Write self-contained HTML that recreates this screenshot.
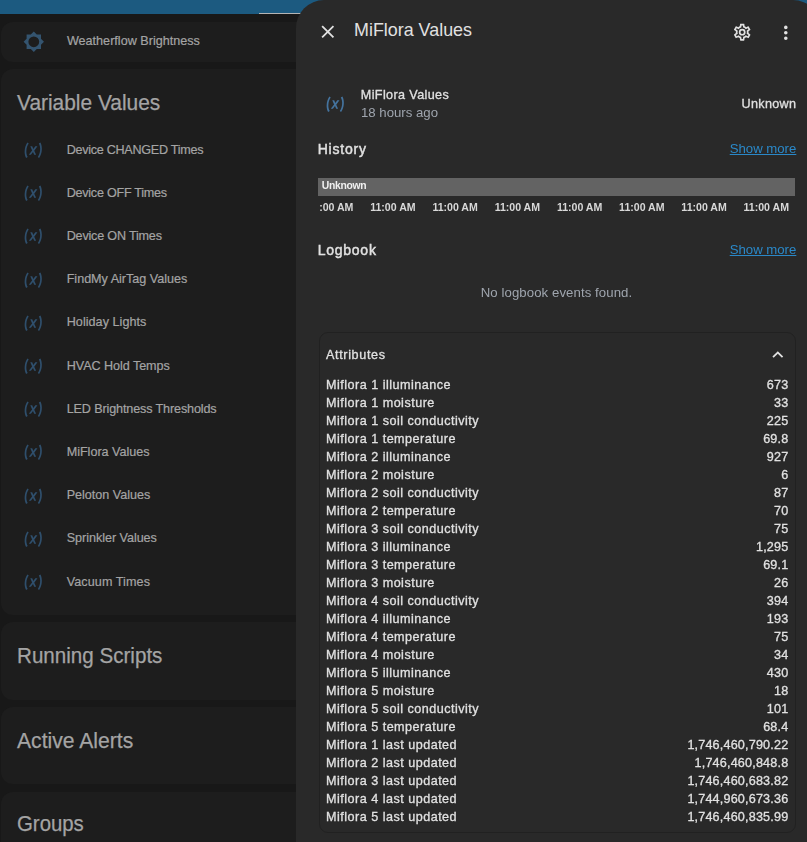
<!DOCTYPE html>
<html><head><meta charset="utf-8"><style>
html,body{margin:0;padding:0;}
body{width:807px;height:842px;overflow:hidden;position:relative;background:#181818;font-family:"Liberation Sans",sans-serif;}
.t{position:absolute;white-space:nowrap;line-height:1;}
.r{position:absolute;}
.i{position:absolute;display:block;}
.clip{position:absolute;overflow:hidden;}
</style></head><body>
<div class="r" style="left:0px;top:0px;width:807px;height:13.6px;background:#1c5a80;border-radius:0;"></div>
<div class="r" style="left:259px;top:12.6px;width:60px;height:1.5px;background:#b4b4b4;border-radius:0;"></div>
<div class="r" style="left:1px;top:21.5px;width:320px;height:40.5px;background:#1d1d1d;border-radius:12px;"></div>
<div class="r" style="left:1px;top:68.6px;width:320px;height:546.0px;background:#1d1d1d;border-radius:12px;"></div>
<div class="r" style="left:1px;top:622px;width:320px;height:78px;background:#1d1d1d;border-radius:12px;"></div>
<div class="r" style="left:1px;top:707px;width:320px;height:77px;background:#1d1d1d;border-radius:12px;"></div>
<div class="r" style="left:1px;top:792px;width:320px;height:108px;background:#1d1d1d;border-radius:12px;"></div>
<svg class="i" style="left:23.00px;top:31.00px;width:21.6px;height:21.6px;" viewBox="0 0 24 24"><path fill="#34546f" fill-rule="evenodd" d="M12,6A6,6 0 0,0 6,12A6,6 0 0,0 12,18A6,6 0 0,0 18,12A6,6 0 0,0 12,6M20,8.69V4H15.31L12,0.69L8.69,4H4V8.69L0.69,12L4,15.31V20H8.69L12,23.31L15.31,20H20V15.31L23.31,12L20,8.69Z"/></svg>
<div class="t" style="left:66.90px;top:35.33px;font-size:12.6px;font-weight:400;color:#a4a4a4;-webkit-text-stroke:0.2px #a4a4a4;letter-spacing:0.011px;">Weatherflow Brightness</div>
<div class="t" style="left:16.90px;top:91.62px;font-size:22.3px;font-weight:400;color:#a4a4a4;-webkit-text-stroke:0.25px #a4a4a4;transform:scaleX(0.9374);transform-origin:0 0;">Variable Values</div>
<div class="t" style="left:16.90px;top:644.52px;font-size:22.3px;font-weight:400;color:#a4a4a4;-webkit-text-stroke:0.25px #a4a4a4;transform:scaleX(0.9238);transform-origin:0 0;">Running Scripts</div>
<div class="t" style="left:16.90px;top:729.52px;font-size:22.3px;font-weight:400;color:#a4a4a4;-webkit-text-stroke:0.25px #a4a4a4;transform:scaleX(0.9475);transform-origin:0 0;">Active Alerts</div>
<div class="t" style="left:16.90px;top:812.72px;font-size:22.3px;font-weight:400;color:#a4a4a4;-webkit-text-stroke:0.25px #a4a4a4;transform:scaleX(0.9136);transform-origin:0 0;">Groups</div>
<svg class="i" style="left:23.25px;top:139.95px;width:20.5px;height:20.5px;" viewBox="0 0 24 24"><path fill="#2f4f6c" fill-rule="evenodd" d="M20.41,3C21.8,5.71 22.35,8.84 22,12C21.8,15.16 20.7,18.29 18.83,21L17.3,20C18.91,17.57 19.85,14.8 20,12C20.34,9.2 19.8,6.43 18.5,4L20.41,3M5.17,3L6.7,4C5.09,6.43 4.150,9.2 4,12C3.66,14.8 4.2,17.57 5.5,20L3.61,21C2.2,18.29 1.65,15.16 2,12C2.2,8.84 3.3,5.71 5.17,3M12.08,10.68L14.4,7.45H16.93L13.15,12.45L15.35,17.37H13.09L11.71,14L9.28,17.33H6.76L10.66,12.21L8.53,7.44H10.8L12.08,10.68Z"/></svg>
<div class="t" style="left:66.70px;top:143.63px;font-size:12.6px;font-weight:400;color:#a4a4a4;-webkit-text-stroke:0.2px #a4a4a4;letter-spacing:-0.278px;">Device CHANGED Times</div>
<svg class="i" style="left:23.25px;top:183.15px;width:20.5px;height:20.5px;" viewBox="0 0 24 24"><path fill="#2f4f6c" fill-rule="evenodd" d="M20.41,3C21.8,5.71 22.35,8.84 22,12C21.8,15.16 20.7,18.29 18.83,21L17.3,20C18.91,17.57 19.85,14.8 20,12C20.34,9.2 19.8,6.43 18.5,4L20.41,3M5.17,3L6.7,4C5.09,6.43 4.150,9.2 4,12C3.66,14.8 4.2,17.57 5.5,20L3.61,21C2.2,18.29 1.65,15.16 2,12C2.2,8.84 3.3,5.71 5.17,3M12.08,10.68L14.4,7.45H16.93L13.15,12.45L15.35,17.37H13.09L11.71,14L9.28,17.33H6.76L10.66,12.21L8.53,7.44H10.8L12.08,10.68Z"/></svg>
<div class="t" style="left:66.70px;top:186.83px;font-size:12.6px;font-weight:400;color:#a4a4a4;-webkit-text-stroke:0.2px #a4a4a4;letter-spacing:-0.253px;">Device OFF Times</div>
<svg class="i" style="left:23.25px;top:226.35px;width:20.5px;height:20.5px;" viewBox="0 0 24 24"><path fill="#2f4f6c" fill-rule="evenodd" d="M20.41,3C21.8,5.71 22.35,8.84 22,12C21.8,15.16 20.7,18.29 18.83,21L17.3,20C18.91,17.57 19.85,14.8 20,12C20.34,9.2 19.8,6.43 18.5,4L20.41,3M5.17,3L6.7,4C5.09,6.43 4.150,9.2 4,12C3.66,14.8 4.2,17.57 5.5,20L3.61,21C2.2,18.29 1.65,15.16 2,12C2.2,8.84 3.3,5.71 5.17,3M12.08,10.68L14.4,7.45H16.93L13.15,12.45L15.35,17.37H13.09L11.71,14L9.28,17.33H6.76L10.66,12.21L8.53,7.44H10.8L12.08,10.68Z"/></svg>
<div class="t" style="left:66.70px;top:230.03px;font-size:12.6px;font-weight:400;color:#a4a4a4;-webkit-text-stroke:0.2px #a4a4a4;letter-spacing:-0.193px;">Device ON Times</div>
<svg class="i" style="left:23.25px;top:269.55px;width:20.5px;height:20.5px;" viewBox="0 0 24 24"><path fill="#2f4f6c" fill-rule="evenodd" d="M20.41,3C21.8,5.71 22.35,8.84 22,12C21.8,15.16 20.7,18.29 18.83,21L17.3,20C18.91,17.57 19.85,14.8 20,12C20.34,9.2 19.8,6.43 18.5,4L20.41,3M5.17,3L6.7,4C5.09,6.43 4.150,9.2 4,12C3.66,14.8 4.2,17.57 5.5,20L3.61,21C2.2,18.29 1.65,15.16 2,12C2.2,8.84 3.3,5.71 5.17,3M12.08,10.68L14.4,7.45H16.93L13.15,12.45L15.35,17.37H13.09L11.71,14L9.28,17.33H6.76L10.66,12.21L8.53,7.44H10.8L12.08,10.68Z"/></svg>
<div class="t" style="left:66.70px;top:273.23px;font-size:12.6px;font-weight:400;color:#a4a4a4;-webkit-text-stroke:0.2px #a4a4a4;letter-spacing:-0.019px;">FindMy AirTag Values</div>
<svg class="i" style="left:23.25px;top:312.75px;width:20.5px;height:20.5px;" viewBox="0 0 24 24"><path fill="#2f4f6c" fill-rule="evenodd" d="M20.41,3C21.8,5.71 22.35,8.84 22,12C21.8,15.16 20.7,18.29 18.83,21L17.3,20C18.91,17.57 19.85,14.8 20,12C20.34,9.2 19.8,6.43 18.5,4L20.41,3M5.17,3L6.7,4C5.09,6.43 4.150,9.2 4,12C3.66,14.8 4.2,17.57 5.5,20L3.61,21C2.2,18.29 1.65,15.16 2,12C2.2,8.84 3.3,5.71 5.17,3M12.08,10.68L14.4,7.45H16.93L13.15,12.45L15.35,17.37H13.09L11.71,14L9.28,17.33H6.76L10.66,12.21L8.53,7.44H10.8L12.08,10.68Z"/></svg>
<div class="t" style="left:66.70px;top:316.43px;font-size:12.6px;font-weight:400;color:#a4a4a4;-webkit-text-stroke:0.2px #a4a4a4;letter-spacing:0.046px;">Holiday Lights</div>
<svg class="i" style="left:23.25px;top:355.95px;width:20.5px;height:20.5px;" viewBox="0 0 24 24"><path fill="#2f4f6c" fill-rule="evenodd" d="M20.41,3C21.8,5.71 22.35,8.84 22,12C21.8,15.16 20.7,18.29 18.83,21L17.3,20C18.91,17.57 19.85,14.8 20,12C20.34,9.2 19.8,6.43 18.5,4L20.41,3M5.17,3L6.7,4C5.09,6.43 4.150,9.2 4,12C3.66,14.8 4.2,17.57 5.5,20L3.61,21C2.2,18.29 1.65,15.16 2,12C2.2,8.84 3.3,5.71 5.17,3M12.08,10.68L14.4,7.45H16.93L13.15,12.45L15.35,17.37H13.09L11.71,14L9.28,17.33H6.76L10.66,12.21L8.53,7.44H10.8L12.08,10.68Z"/></svg>
<div class="t" style="left:66.70px;top:359.63px;font-size:12.6px;font-weight:400;color:#a4a4a4;-webkit-text-stroke:0.2px #a4a4a4;letter-spacing:-0.053px;">HVAC Hold Temps</div>
<svg class="i" style="left:23.25px;top:399.15px;width:20.5px;height:20.5px;" viewBox="0 0 24 24"><path fill="#2f4f6c" fill-rule="evenodd" d="M20.41,3C21.8,5.71 22.35,8.84 22,12C21.8,15.16 20.7,18.29 18.83,21L17.3,20C18.91,17.57 19.85,14.8 20,12C20.34,9.2 19.8,6.43 18.5,4L20.41,3M5.17,3L6.7,4C5.09,6.43 4.150,9.2 4,12C3.66,14.8 4.2,17.57 5.5,20L3.61,21C2.2,18.29 1.65,15.16 2,12C2.2,8.84 3.3,5.71 5.17,3M12.08,10.68L14.4,7.45H16.93L13.15,12.45L15.35,17.37H13.09L11.71,14L9.28,17.33H6.76L10.66,12.21L8.53,7.44H10.8L12.08,10.68Z"/></svg>
<div class="t" style="left:66.70px;top:402.83px;font-size:12.6px;font-weight:400;color:#a4a4a4;-webkit-text-stroke:0.2px #a4a4a4;letter-spacing:-0.129px;">LED Brightness Thresholds</div>
<svg class="i" style="left:23.25px;top:442.35px;width:20.5px;height:20.5px;" viewBox="0 0 24 24"><path fill="#2f4f6c" fill-rule="evenodd" d="M20.41,3C21.8,5.71 22.35,8.84 22,12C21.8,15.16 20.7,18.29 18.83,21L17.3,20C18.91,17.57 19.85,14.8 20,12C20.34,9.2 19.8,6.43 18.5,4L20.41,3M5.17,3L6.7,4C5.09,6.43 4.150,9.2 4,12C3.66,14.8 4.2,17.57 5.5,20L3.61,21C2.2,18.29 1.65,15.16 2,12C2.2,8.84 3.3,5.71 5.17,3M12.08,10.68L14.4,7.45H16.93L13.15,12.45L15.35,17.37H13.09L11.71,14L9.28,17.33H6.76L10.66,12.21L8.53,7.44H10.8L12.08,10.68Z"/></svg>
<div class="t" style="left:66.70px;top:446.03px;font-size:12.6px;font-weight:400;color:#a4a4a4;-webkit-text-stroke:0.2px #a4a4a4;letter-spacing:-0.019px;">MiFlora Values</div>
<svg class="i" style="left:23.25px;top:485.55px;width:20.5px;height:20.5px;" viewBox="0 0 24 24"><path fill="#2f4f6c" fill-rule="evenodd" d="M20.41,3C21.8,5.71 22.35,8.84 22,12C21.8,15.16 20.7,18.29 18.83,21L17.3,20C18.91,17.57 19.85,14.8 20,12C20.34,9.2 19.8,6.43 18.5,4L20.41,3M5.17,3L6.7,4C5.09,6.43 4.150,9.2 4,12C3.66,14.8 4.2,17.57 5.5,20L3.61,21C2.2,18.29 1.65,15.16 2,12C2.2,8.84 3.3,5.71 5.17,3M12.08,10.68L14.4,7.45H16.93L13.15,12.45L15.35,17.37H13.09L11.71,14L9.28,17.33H6.76L10.66,12.21L8.53,7.44H10.8L12.08,10.68Z"/></svg>
<div class="t" style="left:66.70px;top:489.23px;font-size:12.6px;font-weight:400;color:#a4a4a4;-webkit-text-stroke:0.2px #a4a4a4;letter-spacing:-0.022px;">Peloton Values</div>
<svg class="i" style="left:23.25px;top:528.75px;width:20.5px;height:20.5px;" viewBox="0 0 24 24"><path fill="#2f4f6c" fill-rule="evenodd" d="M20.41,3C21.8,5.71 22.35,8.84 22,12C21.8,15.16 20.7,18.29 18.83,21L17.3,20C18.91,17.57 19.85,14.8 20,12C20.34,9.2 19.8,6.43 18.5,4L20.41,3M5.17,3L6.7,4C5.09,6.43 4.150,9.2 4,12C3.66,14.8 4.2,17.57 5.5,20L3.61,21C2.2,18.29 1.65,15.16 2,12C2.2,8.84 3.3,5.71 5.17,3M12.08,10.68L14.4,7.45H16.93L13.15,12.45L15.35,17.37H13.09L11.71,14L9.28,17.33H6.76L10.66,12.21L8.53,7.44H10.8L12.08,10.68Z"/></svg>
<div class="t" style="left:66.70px;top:532.43px;font-size:12.6px;font-weight:400;color:#a4a4a4;-webkit-text-stroke:0.2px #a4a4a4;letter-spacing:-0.038px;">Sprinkler Values</div>
<svg class="i" style="left:23.25px;top:571.95px;width:20.5px;height:20.5px;" viewBox="0 0 24 24"><path fill="#2f4f6c" fill-rule="evenodd" d="M20.41,3C21.8,5.71 22.35,8.84 22,12C21.8,15.16 20.7,18.29 18.83,21L17.3,20C18.91,17.57 19.85,14.8 20,12C20.34,9.2 19.8,6.43 18.5,4L20.41,3M5.17,3L6.7,4C5.09,6.43 4.150,9.2 4,12C3.66,14.8 4.2,17.57 5.5,20L3.61,21C2.2,18.29 1.65,15.16 2,12C2.2,8.84 3.3,5.71 5.17,3M12.08,10.68L14.4,7.45H16.93L13.15,12.45L15.35,17.37H13.09L11.71,14L9.28,17.33H6.76L10.66,12.21L8.53,7.44H10.8L12.08,10.68Z"/></svg>
<div class="t" style="left:66.70px;top:575.63px;font-size:12.6px;font-weight:400;color:#a4a4a4;-webkit-text-stroke:0.2px #a4a4a4;letter-spacing:0.084px;">Vacuum Times</div>
<div class="r" style="left:295.8px;top:0px;width:525.6px;height:900px;background:#292929;border-radius:28px;"></div>
<svg class="i" style="left:317.30px;top:21.15px;width:21.6px;height:21.6px;" viewBox="0 0 24 24"><path fill="#e1e1e1" fill-rule="evenodd" d="M19,6.41L17.59,5L12,10.59L6.41,5L5,6.41L10.59,12L5,17.59L6.41,19L12,13.41L17.59,19L19,17.59L13.41,12L19,6.41Z"/></svg>
<div class="t" style="left:354.00px;top:22.05px;font-size:17.9px;font-weight:400;color:#e1e1e1;">MiFlora Values</div>
<svg class="i" style="left:732.40px;top:22.30px;width:20.4px;height:20.4px;" viewBox="0 0 24 24"><path fill="#e1e1e1" fill-rule="evenodd" d="M12,8A4,4 0 0,1 16,12A4,4 0 0,1 12,16A4,4 0 0,1 8,12A4,4 0 0,1 12,8M12,10A2,2 0 0,0 10,12A2,2 0 0,0 12,14A2,2 0 0,0 14,12A2,2 0 0,0 12,10M10,22C9.75,22 9.54,21.82 9.5,21.58L9.13,18.93C8.5,18.68 7.96,18.34 7.44,17.94L4.95,18.95C4.73,19.03 4.46,18.95 4.34,18.73L2.34,15.27C2.21,15.05 2.27,14.78 2.46,14.63L4.57,12.97L4.5,12L4.57,11L2.46,9.37C2.27,9.22 2.21,8.95 2.34,8.73L4.34,5.27C4.46,5.05 4.73,4.96 4.95,5.05L7.44,6.05C7.96,5.66 8.5,5.32 9.130,5.07L9.5,2.42C9.54,2.18 9.75,2 10,2H14C14.25,2 14.46,2.18 14.5,2.42L14.87,5.07C15.5,5.32 16.04,5.66 16.56,6.05L19.05,5.05C19.27,4.96 19.54,5.05 19.66,5.27L21.66,8.73C21.79,8.95 21.73,9.22 21.54,9.37L19.43,11L19.5,12L19.43,13L21.54,14.63C21.73,14.78 21.79,15.05 21.66,15.27L19.66,18.73C19.54,18.95 19.27,19.04 19.05,18.95L16.56,17.95C16.04,18.34 15.5,18.68 14.87,18.93L14.5,21.58C14.46,21.82 14.25,22 14,22H10M11.25,4L10.88,6.61C9.68,6.86 8.62,7.5 7.85,8.39L5.44,7.35L4.69,8.65L6.8,10.2C6.4,11.37 6.4,12.64 6.8,13.8L4.68,15.36L5.43,16.66L7.86,15.62C8.63,16.5 9.68,17.14 10.87,17.38L11.24,20H12.76L13.13,17.39C14.32,17.14 15.37,16.5 16.14,15.62L18.57,16.66L19.32,15.36L17.2,13.81C17.6,12.64 17.6,11.37 17.2,10.2L19.31,8.65L18.56,7.35L16.15,8.39C15.38,7.5 14.32,6.86 13.12,6.62L12.75,4H11.25Z"/></svg>
<svg class="i" style="left:774.80px;top:21.70px;width:21.6px;height:21.6px;" viewBox="0 0 24 24"><path fill="#e1e1e1" fill-rule="evenodd" d="M12,16A2,2 0 0,1 14,18A2,2 0 0,1 12,20A2,2 0 0,1 10,18A2,2 0 0,1 12,16M12,10A2,2 0 0,1 14,12A2,2 0 0,1 12,14A2,2 0 0,1 10,12A2,2 0 0,1 12,10M12,4A2,2 0 0,1 14,6A2,2 0 0,1 12,8A2,2 0 0,1 10,6A2,2 0 0,1 12,4Z"/></svg>
<svg class="i" style="left:325.15px;top:93.85px;width:20.5px;height:20.5px;" viewBox="0 0 24 24"><path fill="#44739e" fill-rule="evenodd" d="M20.41,3C21.8,5.71 22.35,8.84 22,12C21.8,15.16 20.7,18.29 18.83,21L17.3,20C18.91,17.57 19.85,14.8 20,12C20.34,9.2 19.8,6.43 18.5,4L20.41,3M5.17,3L6.7,4C5.09,6.43 4.150,9.2 4,12C3.66,14.8 4.2,17.57 5.5,20L3.61,21C2.2,18.29 1.65,15.16 2,12C2.2,8.84 3.3,5.71 5.17,3M12.08,10.68L14.4,7.45H16.93L13.15,12.45L15.35,17.37H13.09L11.71,14L9.28,17.33H6.76L10.66,12.21L8.53,7.44H10.8L12.08,10.68Z"/></svg>
<div class="t" style="left:360.80px;top:88.83px;font-size:12.6px;font-weight:400;color:#e1e1e1;-webkit-text-stroke:0.3px #e1e1e1;transform:translateZ(0);letter-spacing:0.381px;">MiFlora Values</div>
<div class="t" style="left:361.00px;top:105.63px;font-size:13.2px;font-weight:400;color:#9fa5ae;transform:translateZ(0);">18 hours ago</div>
<div class="t" style="right:11.00px;top:98.23px;font-size:12.6px;font-weight:400;color:#e1e1e1;-webkit-text-stroke:0.3px #e1e1e1;transform:translateZ(0);letter-spacing:0.316px;margin-right:-0.316px;">Unknown</div>
<div class="t" style="left:317.70px;top:142.35px;font-size:14.0px;font-weight:400;color:#e1e1e1;-webkit-text-stroke:0.45px #e1e1e1;transform:translateZ(0);letter-spacing:0.790px;">History</div>
<div class="t" style="right:10.70px;top:141.73px;font-size:13.2px;font-weight:400;color:#2a88c8;transform:translateZ(0);text-decoration:underline;letter-spacing:-0.012px;margin-right:0.012px;">Show more</div>
<div class="r" style="left:317.8px;top:178px;width:477.3px;height:17.8px;background:#636363;border-radius:0;"></div>
<div class="t" style="left:321.70px;top:181.10px;font-size:10.4px;font-weight:700;color:#f0f0f0;transform:translateZ(0);letter-spacing:-0.292px;">Unknown</div>
<div class="clip" style="left:320px;top:195px;width:475px;height:25px;">
<div class="t" style="left:-12.03px;top:7.43px;font-size:10.6px;font-weight:700;color:#d8d8d8;transform:translateZ(0);letter-spacing:-0.018px;">11:00 AM</div>
<div class="t" style="left:50.20px;top:7.43px;font-size:10.6px;font-weight:700;color:#d8d8d8;transform:translateZ(0);letter-spacing:-0.018px;">11:00 AM</div>
<div class="t" style="left:112.43px;top:7.43px;font-size:10.6px;font-weight:700;color:#d8d8d8;transform:translateZ(0);letter-spacing:-0.018px;">11:00 AM</div>
<div class="t" style="left:174.66px;top:7.43px;font-size:10.6px;font-weight:700;color:#d8d8d8;transform:translateZ(0);letter-spacing:-0.018px;">11:00 AM</div>
<div class="t" style="left:236.89px;top:7.43px;font-size:10.6px;font-weight:700;color:#d8d8d8;transform:translateZ(0);letter-spacing:-0.018px;">11:00 AM</div>
<div class="t" style="left:299.12px;top:7.43px;font-size:10.6px;font-weight:700;color:#d8d8d8;transform:translateZ(0);letter-spacing:-0.018px;">11:00 AM</div>
<div class="t" style="left:361.35px;top:7.43px;font-size:10.6px;font-weight:700;color:#d8d8d8;transform:translateZ(0);letter-spacing:-0.018px;">11:00 AM</div>
<div class="t" style="left:423.58px;top:7.43px;font-size:10.6px;font-weight:700;color:#d8d8d8;transform:translateZ(0);letter-spacing:-0.018px;">11:00 AM</div>
</div>
<div class="t" style="left:317.70px;top:242.95px;font-size:14.0px;font-weight:400;color:#e1e1e1;-webkit-text-stroke:0.45px #e1e1e1;transform:translateZ(0);letter-spacing:0.747px;">Logbook</div>
<div class="t" style="right:10.70px;top:243.33px;font-size:13.2px;font-weight:400;color:#2a88c8;transform:translateZ(0);text-decoration:underline;letter-spacing:-0.012px;margin-right:0.012px;">Show more</div>
<div class="t" style="left:480.70px;top:286.03px;font-size:13.2px;font-weight:400;color:#9fa5ae;transform:translateZ(0);letter-spacing:0.084px;">No logbook events found.</div>
<div class="r" style="left:318.6px;top:332.2px;width:477px;height:500.6px;background:transparent;border-radius:9px;border:1px solid #212121;box-sizing:border-box;"></div>
<div class="t" style="left:326.00px;top:349.23px;font-size:12.6px;font-weight:400;color:#e1e1e1;-webkit-text-stroke:0.3px #e1e1e1;transform:translateZ(0);letter-spacing:0.645px;">Attributes</div>
<svg class="i" style="left:767.20px;top:344.00px;width:21.6px;height:21.6px;" viewBox="0 0 24 24"><path fill="#e1e1e1" fill-rule="evenodd" d="M7.41,15.41L12,10.83L16.59,15.41L18,14L12,8L6,14L7.41,15.41Z"/></svg>
<div class="t" style="left:326.00px;top:379.33px;font-size:12.6px;font-weight:400;color:#e1e1e1;-webkit-text-stroke:0.3px #e1e1e1;transform:translateZ(0);letter-spacing:0.486px;">Miflora 1 illuminance</div>
<div class="t" style="right:18.80px;top:379.33px;font-size:12.6px;font-weight:400;color:#e1e1e1;-webkit-text-stroke:0.3px #e1e1e1;transform:translateZ(0);letter-spacing:0.184px;margin-right:-0.184px;">673</div>
<div class="t" style="left:326.00px;top:397.33px;font-size:12.6px;font-weight:400;color:#e1e1e1;-webkit-text-stroke:0.3px #e1e1e1;transform:translateZ(0);letter-spacing:0.486px;">Miflora 1 moisture</div>
<div class="t" style="right:18.80px;top:397.33px;font-size:12.6px;font-weight:400;color:#e1e1e1;-webkit-text-stroke:0.3px #e1e1e1;transform:translateZ(0);letter-spacing:0.184px;margin-right:-0.184px;">33</div>
<div class="t" style="left:326.00px;top:415.33px;font-size:12.6px;font-weight:400;color:#e1e1e1;-webkit-text-stroke:0.3px #e1e1e1;transform:translateZ(0);letter-spacing:0.486px;">Miflora 1 soil conductivity</div>
<div class="t" style="right:18.80px;top:415.33px;font-size:12.6px;font-weight:400;color:#e1e1e1;-webkit-text-stroke:0.3px #e1e1e1;transform:translateZ(0);letter-spacing:0.184px;margin-right:-0.184px;">225</div>
<div class="t" style="left:326.00px;top:433.33px;font-size:12.6px;font-weight:400;color:#e1e1e1;-webkit-text-stroke:0.3px #e1e1e1;transform:translateZ(0);letter-spacing:0.486px;">Miflora 1 temperature</div>
<div class="t" style="right:18.80px;top:433.33px;font-size:12.6px;font-weight:400;color:#e1e1e1;-webkit-text-stroke:0.3px #e1e1e1;transform:translateZ(0);letter-spacing:0.184px;margin-right:-0.184px;">69.8</div>
<div class="t" style="left:326.00px;top:451.33px;font-size:12.6px;font-weight:400;color:#e1e1e1;-webkit-text-stroke:0.3px #e1e1e1;transform:translateZ(0);letter-spacing:0.486px;">Miflora 2 illuminance</div>
<div class="t" style="right:18.80px;top:451.33px;font-size:12.6px;font-weight:400;color:#e1e1e1;-webkit-text-stroke:0.3px #e1e1e1;transform:translateZ(0);letter-spacing:0.184px;margin-right:-0.184px;">927</div>
<div class="t" style="left:326.00px;top:469.33px;font-size:12.6px;font-weight:400;color:#e1e1e1;-webkit-text-stroke:0.3px #e1e1e1;transform:translateZ(0);letter-spacing:0.486px;">Miflora 2 moisture</div>
<div class="t" style="right:18.80px;top:469.33px;font-size:12.6px;font-weight:400;color:#e1e1e1;-webkit-text-stroke:0.3px #e1e1e1;transform:translateZ(0);letter-spacing:0.184px;margin-right:-0.184px;">6</div>
<div class="t" style="left:326.00px;top:487.33px;font-size:12.6px;font-weight:400;color:#e1e1e1;-webkit-text-stroke:0.3px #e1e1e1;transform:translateZ(0);letter-spacing:0.486px;">Miflora 2 soil conductivity</div>
<div class="t" style="right:18.80px;top:487.33px;font-size:12.6px;font-weight:400;color:#e1e1e1;-webkit-text-stroke:0.3px #e1e1e1;transform:translateZ(0);letter-spacing:0.184px;margin-right:-0.184px;">87</div>
<div class="t" style="left:326.00px;top:505.33px;font-size:12.6px;font-weight:400;color:#e1e1e1;-webkit-text-stroke:0.3px #e1e1e1;transform:translateZ(0);letter-spacing:0.486px;">Miflora 2 temperature</div>
<div class="t" style="right:18.80px;top:505.33px;font-size:12.6px;font-weight:400;color:#e1e1e1;-webkit-text-stroke:0.3px #e1e1e1;transform:translateZ(0);letter-spacing:0.184px;margin-right:-0.184px;">70</div>
<div class="t" style="left:326.00px;top:523.33px;font-size:12.6px;font-weight:400;color:#e1e1e1;-webkit-text-stroke:0.3px #e1e1e1;transform:translateZ(0);letter-spacing:0.486px;">Miflora 3 soil conductivity</div>
<div class="t" style="right:18.80px;top:523.33px;font-size:12.6px;font-weight:400;color:#e1e1e1;-webkit-text-stroke:0.3px #e1e1e1;transform:translateZ(0);letter-spacing:0.184px;margin-right:-0.184px;">75</div>
<div class="t" style="left:326.00px;top:541.33px;font-size:12.6px;font-weight:400;color:#e1e1e1;-webkit-text-stroke:0.3px #e1e1e1;transform:translateZ(0);letter-spacing:0.486px;">Miflora 3 illuminance</div>
<div class="t" style="right:18.80px;top:541.33px;font-size:12.6px;font-weight:400;color:#e1e1e1;-webkit-text-stroke:0.3px #e1e1e1;transform:translateZ(0);letter-spacing:0.184px;margin-right:-0.184px;">1,295</div>
<div class="t" style="left:326.00px;top:559.33px;font-size:12.6px;font-weight:400;color:#e1e1e1;-webkit-text-stroke:0.3px #e1e1e1;transform:translateZ(0);letter-spacing:0.486px;">Miflora 3 temperature</div>
<div class="t" style="right:18.80px;top:559.33px;font-size:12.6px;font-weight:400;color:#e1e1e1;-webkit-text-stroke:0.3px #e1e1e1;transform:translateZ(0);letter-spacing:0.184px;margin-right:-0.184px;">69.1</div>
<div class="t" style="left:326.00px;top:577.33px;font-size:12.6px;font-weight:400;color:#e1e1e1;-webkit-text-stroke:0.3px #e1e1e1;transform:translateZ(0);letter-spacing:0.486px;">Miflora 3 moisture</div>
<div class="t" style="right:18.80px;top:577.33px;font-size:12.6px;font-weight:400;color:#e1e1e1;-webkit-text-stroke:0.3px #e1e1e1;transform:translateZ(0);letter-spacing:0.184px;margin-right:-0.184px;">26</div>
<div class="t" style="left:326.00px;top:595.33px;font-size:12.6px;font-weight:400;color:#e1e1e1;-webkit-text-stroke:0.3px #e1e1e1;transform:translateZ(0);letter-spacing:0.486px;">Miflora 4 soil conductivity</div>
<div class="t" style="right:18.80px;top:595.33px;font-size:12.6px;font-weight:400;color:#e1e1e1;-webkit-text-stroke:0.3px #e1e1e1;transform:translateZ(0);letter-spacing:0.184px;margin-right:-0.184px;">394</div>
<div class="t" style="left:326.00px;top:613.33px;font-size:12.6px;font-weight:400;color:#e1e1e1;-webkit-text-stroke:0.3px #e1e1e1;transform:translateZ(0);letter-spacing:0.486px;">Miflora 4 illuminance</div>
<div class="t" style="right:18.80px;top:613.33px;font-size:12.6px;font-weight:400;color:#e1e1e1;-webkit-text-stroke:0.3px #e1e1e1;transform:translateZ(0);letter-spacing:0.184px;margin-right:-0.184px;">193</div>
<div class="t" style="left:326.00px;top:631.33px;font-size:12.6px;font-weight:400;color:#e1e1e1;-webkit-text-stroke:0.3px #e1e1e1;transform:translateZ(0);letter-spacing:0.486px;">Miflora 4 temperature</div>
<div class="t" style="right:18.80px;top:631.33px;font-size:12.6px;font-weight:400;color:#e1e1e1;-webkit-text-stroke:0.3px #e1e1e1;transform:translateZ(0);letter-spacing:0.184px;margin-right:-0.184px;">75</div>
<div class="t" style="left:326.00px;top:649.33px;font-size:12.6px;font-weight:400;color:#e1e1e1;-webkit-text-stroke:0.3px #e1e1e1;transform:translateZ(0);letter-spacing:0.486px;">Miflora 4 moisture</div>
<div class="t" style="right:18.80px;top:649.33px;font-size:12.6px;font-weight:400;color:#e1e1e1;-webkit-text-stroke:0.3px #e1e1e1;transform:translateZ(0);letter-spacing:0.184px;margin-right:-0.184px;">34</div>
<div class="t" style="left:326.00px;top:667.33px;font-size:12.6px;font-weight:400;color:#e1e1e1;-webkit-text-stroke:0.3px #e1e1e1;transform:translateZ(0);letter-spacing:0.486px;">Miflora 5 illuminance</div>
<div class="t" style="right:18.80px;top:667.33px;font-size:12.6px;font-weight:400;color:#e1e1e1;-webkit-text-stroke:0.3px #e1e1e1;transform:translateZ(0);letter-spacing:0.184px;margin-right:-0.184px;">430</div>
<div class="t" style="left:326.00px;top:685.33px;font-size:12.6px;font-weight:400;color:#e1e1e1;-webkit-text-stroke:0.3px #e1e1e1;transform:translateZ(0);letter-spacing:0.486px;">Miflora 5 moisture</div>
<div class="t" style="right:18.80px;top:685.33px;font-size:12.6px;font-weight:400;color:#e1e1e1;-webkit-text-stroke:0.3px #e1e1e1;transform:translateZ(0);letter-spacing:0.184px;margin-right:-0.184px;">18</div>
<div class="t" style="left:326.00px;top:703.33px;font-size:12.6px;font-weight:400;color:#e1e1e1;-webkit-text-stroke:0.3px #e1e1e1;transform:translateZ(0);letter-spacing:0.486px;">Miflora 5 soil conductivity</div>
<div class="t" style="right:18.80px;top:703.33px;font-size:12.6px;font-weight:400;color:#e1e1e1;-webkit-text-stroke:0.3px #e1e1e1;transform:translateZ(0);letter-spacing:0.184px;margin-right:-0.184px;">101</div>
<div class="t" style="left:326.00px;top:721.33px;font-size:12.6px;font-weight:400;color:#e1e1e1;-webkit-text-stroke:0.3px #e1e1e1;transform:translateZ(0);letter-spacing:0.486px;">Miflora 5 temperature</div>
<div class="t" style="right:18.80px;top:721.33px;font-size:12.6px;font-weight:400;color:#e1e1e1;-webkit-text-stroke:0.3px #e1e1e1;transform:translateZ(0);letter-spacing:0.184px;margin-right:-0.184px;">68.4</div>
<div class="t" style="left:326.00px;top:739.33px;font-size:12.6px;font-weight:400;color:#e1e1e1;-webkit-text-stroke:0.3px #e1e1e1;transform:translateZ(0);letter-spacing:0.486px;">Miflora 1 last updated</div>
<div class="t" style="right:18.80px;top:739.33px;font-size:12.6px;font-weight:400;color:#e1e1e1;-webkit-text-stroke:0.3px #e1e1e1;transform:translateZ(0);letter-spacing:0.184px;margin-right:-0.184px;">1,746,460,790.22</div>
<div class="t" style="left:326.00px;top:757.33px;font-size:12.6px;font-weight:400;color:#e1e1e1;-webkit-text-stroke:0.3px #e1e1e1;transform:translateZ(0);letter-spacing:0.486px;">Miflora 2 last updated</div>
<div class="t" style="right:18.80px;top:757.33px;font-size:12.6px;font-weight:400;color:#e1e1e1;-webkit-text-stroke:0.3px #e1e1e1;transform:translateZ(0);letter-spacing:0.184px;margin-right:-0.184px;">1,746,460,848.8</div>
<div class="t" style="left:326.00px;top:775.33px;font-size:12.6px;font-weight:400;color:#e1e1e1;-webkit-text-stroke:0.3px #e1e1e1;transform:translateZ(0);letter-spacing:0.486px;">Miflora 3 last updated</div>
<div class="t" style="right:18.80px;top:775.33px;font-size:12.6px;font-weight:400;color:#e1e1e1;-webkit-text-stroke:0.3px #e1e1e1;transform:translateZ(0);letter-spacing:0.184px;margin-right:-0.184px;">1,746,460,683.82</div>
<div class="t" style="left:326.00px;top:793.33px;font-size:12.6px;font-weight:400;color:#e1e1e1;-webkit-text-stroke:0.3px #e1e1e1;transform:translateZ(0);letter-spacing:0.486px;">Miflora 4 last updated</div>
<div class="t" style="right:18.80px;top:793.33px;font-size:12.6px;font-weight:400;color:#e1e1e1;-webkit-text-stroke:0.3px #e1e1e1;transform:translateZ(0);letter-spacing:0.184px;margin-right:-0.184px;">1,744,960,673.36</div>
<div class="t" style="left:326.00px;top:811.33px;font-size:12.6px;font-weight:400;color:#e1e1e1;-webkit-text-stroke:0.3px #e1e1e1;transform:translateZ(0);letter-spacing:0.486px;">Miflora 5 last updated</div>
<div class="t" style="right:18.80px;top:811.33px;font-size:12.6px;font-weight:400;color:#e1e1e1;-webkit-text-stroke:0.3px #e1e1e1;transform:translateZ(0);letter-spacing:0.184px;margin-right:-0.184px;">1,746,460,835.99</div>
</body></html>
